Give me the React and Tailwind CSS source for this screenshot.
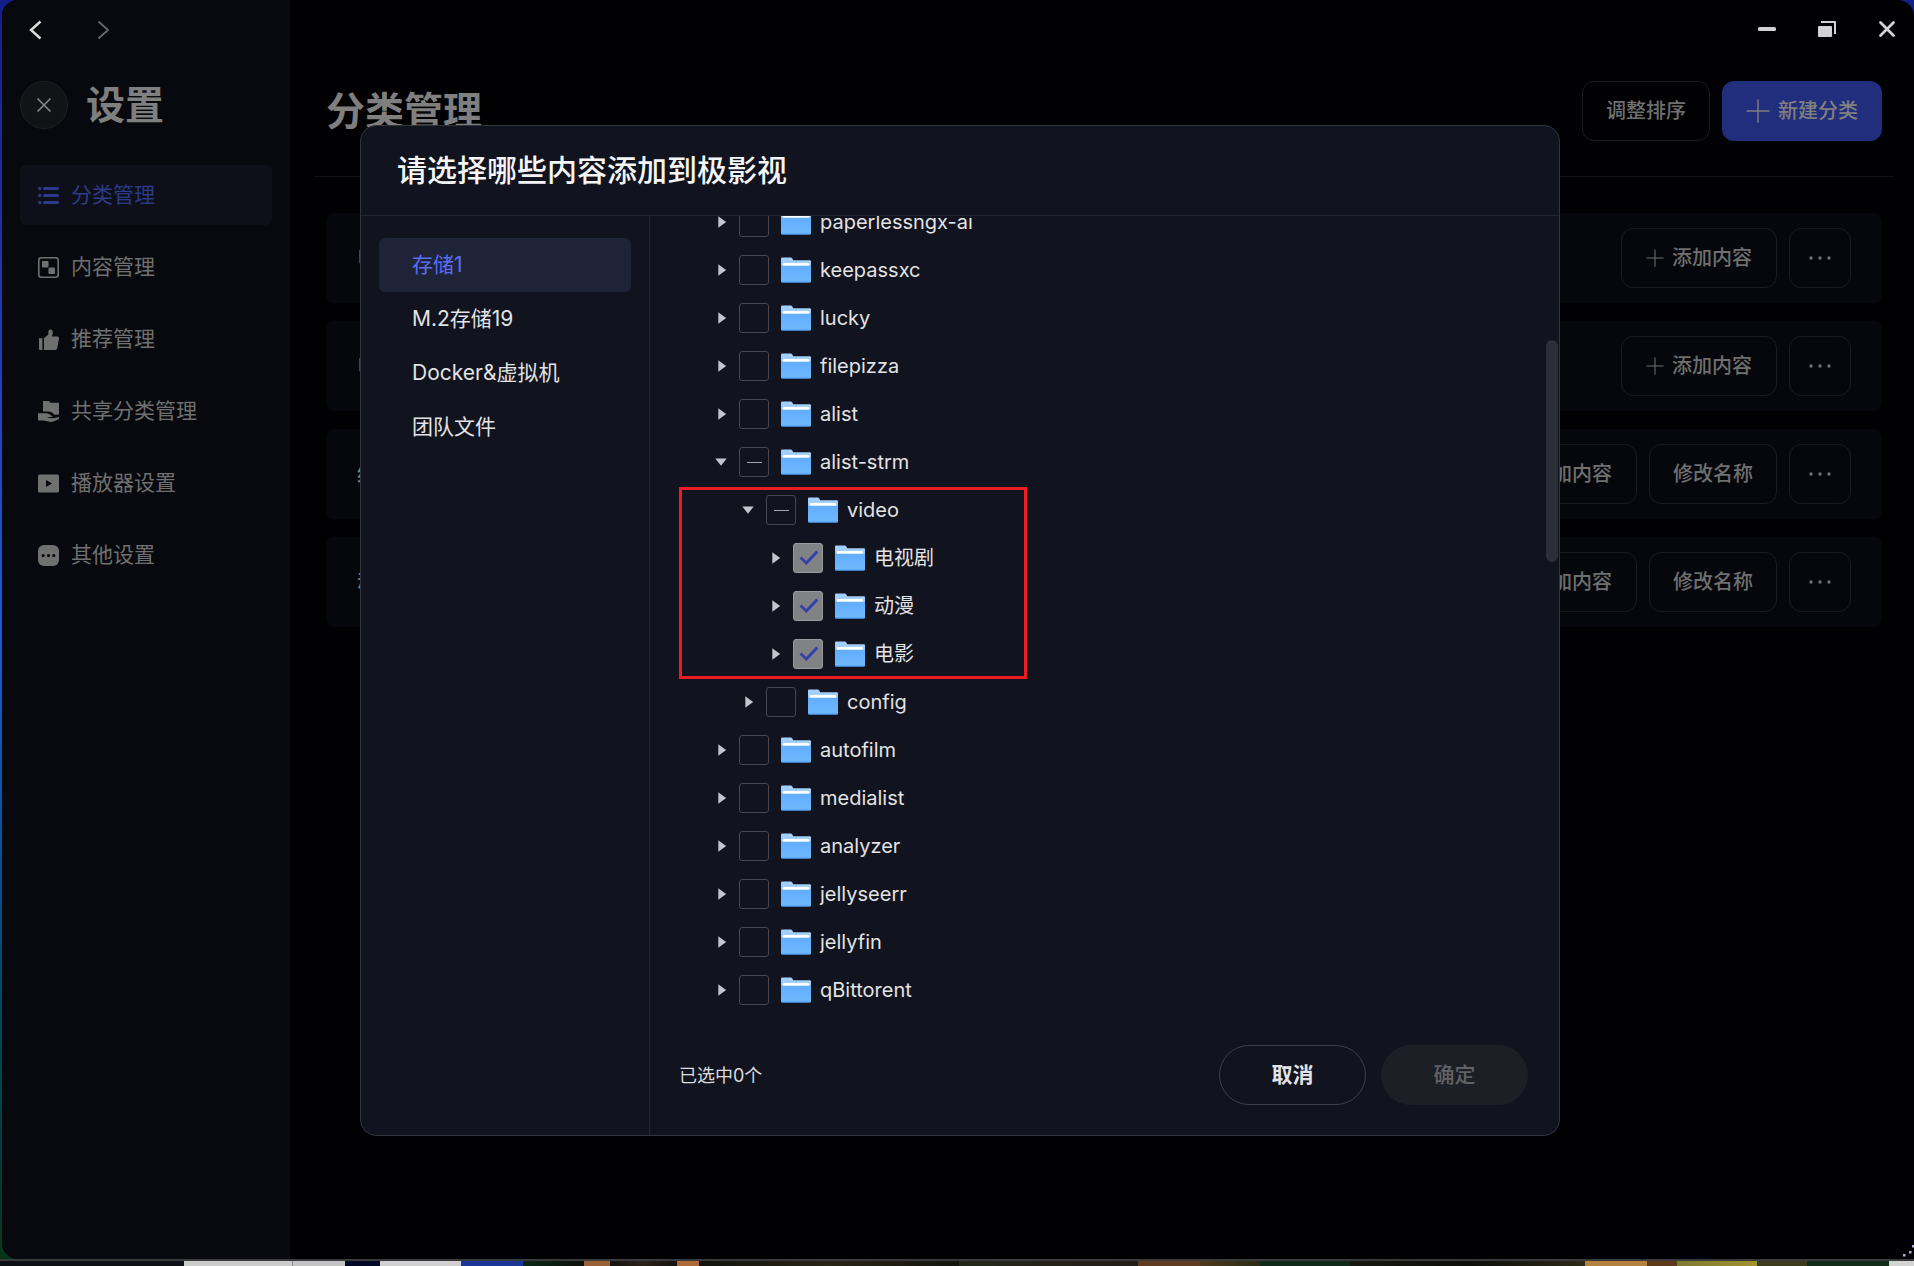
import { useEffect, useRef, useState } from 'react'
import clsx from 'clsx'

const NAV_ITEMS = [
  { key: 'category', label: '分类管理', Icon: ListIcon },
  { key: 'content', label: '内容管理', Icon: ContentIcon },
  { key: 'recommend', label: '推荐管理', Icon: ThumbIcon },
  { key: 'share', label: '共享分类管理', Icon: ShareIcon },
  { key: 'player', label: '播放器设置', Icon: PlayerIcon },
  { key: 'other', label: '其他设置', Icon: OtherIcon },
]

const CATEGORIES = [
  { name: '电影', canRename: false },
  { name: '电视剧', canRename: false },
  { name: '综艺', canRename: true },
  { name: '动漫', canRename: true },
]

const STORAGES = ['存储1', 'M.2存储19', 'Docker&虚拟机', '团队文件']

const TREE_TOP = [
  { name: 'paperlessngx-ai' },
  { name: 'keepassxc' },
  { name: 'lucky' },
  { name: 'filepizza' },
  { name: 'alist' },
  { name: 'alist-strm', open: true, state: 'partial' },
]

const TREE_MARKED = [
  { name: 'video', level: 1, open: true, state: 'partial' },
  { name: '电视剧', level: 2, state: 'locked' },
  { name: '动漫', level: 2, state: 'locked' },
  { name: '电影', level: 2, state: 'locked' },
]

const TREE_BOTTOM = [
  { name: 'config', level: 1 },
  { name: 'autofilm' },
  { name: 'medialist' },
  { name: 'analyzer' },
  { name: 'jellyseerr' },
  { name: 'jellyfin' },
  { name: 'qBittorent' },
]

const INDENT = ['pl-[65px]', 'pl-[92px]', 'pl-[119px]']

function ListIcon() {
  return (
    <svg width="21" height="21" viewBox="0 0 21 21" fill="currentColor" aria-hidden="true">
      <circle cx="1.7" cy="3.5" r="1.7" />
      <circle cx="1.7" cy="10.5" r="1.7" />
      <circle cx="1.7" cy="17.5" r="1.7" />
      <rect x="5" y="1.9" width="16" height="3.2" rx="1.5" />
      <rect x="5" y="8.9" width="16" height="3.2" rx="1.5" />
      <rect x="5" y="15.9" width="16" height="3.2" rx="1.5" />
    </svg>
  )
}

function ContentIcon() {
  return (
    <svg width="21" height="21" viewBox="0 0 21 21" fill="currentColor" aria-hidden="true">
      <rect x="0.8" y="0.8" width="19.4" height="19.4" rx="2.5" fill="none" stroke="currentColor" strokeWidth="1.6" />
      <rect x="4" y="4" width="6.5" height="6.5" rx="1" />
      <rect x="10.5" y="10.5" width="6.5" height="6.5" rx="1" />
    </svg>
  )
}

function ThumbIcon() {
  return (
    <svg width="21" height="21" viewBox="0 0 21 21" fill="currentColor" aria-hidden="true">
      <path d="M1 9.2h3.4V21H2.2A1.2 1.2 0 0 1 1 19.8z" />
      <path d="M6 9.2 10.4 5.6V2.6C10.4 1.4 11.3.6 12.4.6c1.4 0 2.4 1.1 2.4 2.6 0 1.5-.4 2.9-1 4.2h5.4c1.2 0 2 1 1.8 2.1l-1.7 9.6c-.2 1.1-1 1.9-2.2 1.9H6z" />
    </svg>
  )
}

function ShareIcon() {
  return (
    <svg width="21" height="21" viewBox="0 0 21 21" fill="currentColor" aria-hidden="true">
      <path d="M5 0h6l1.5 1.8H21v11.6l-4.4.4c-1.6-2.3-4-3.4-6.6-3.4H5z" />
      <path d="M0 12.2h8.2c2.2 0 3.8 1 5.2 2.6l1.2 1.2-5 .2.2.9 5.6.2L21 15.9v2.2l-5.8 2.4c-1.6.6-3.2.6-4.8 0L5.4 19.4H0z" />
    </svg>
  )
}

function PlayerIcon() {
  return (
    <svg width="21" height="21" viewBox="0 0 21 21" fill="currentColor" aria-hidden="true">
      <path
        fillRule="evenodd"
        d="M1.5 1.5h18A1.5 1.5 0 0 1 21 3v15a1.5 1.5 0 0 1-1.5 1.5h-18A1.5 1.5 0 0 1 0 18V3a1.5 1.5 0 0 1 1.5-1.5zM8 7v7l6-3.5z"
      />
    </svg>
  )
}

function OtherIcon() {
  return (
    <svg width="21" height="21" viewBox="0 0 21 21" aria-hidden="true">
      <rect width="21" height="21" rx="6" fill="currentColor" />
      <g fill="#07090e">
        <circle cx="5.2" cy="10.5" r="1.6" />
        <circle cx="10.5" cy="10.5" r="1.6" />
        <circle cx="15.8" cy="10.5" r="1.6" />
      </g>
    </svg>
  )
}

function PlusIcon({ size }) {
  return (
    <svg width={size} height={size} viewBox="0 0 24 24" fill="none" stroke="currentColor" strokeWidth="1.4" aria-hidden="true">
      <path d="M12 0.5v23M0.5 12h23" />
    </svg>
  )
}

function FolderIcon() {
  return (
    <svg width="30" height="26" viewBox="0 0 30 26" className="shrink-0" aria-hidden="true">
      <defs>
        <linearGradient id="folder-front" x1="0" y1="0" x2="0" y2="1">
          <stop offset="0" stopColor="#62aefd" />
          <stop offset="1" stopColor="#70b9ff" />
        </linearGradient>
      </defs>
      <path d="M1.2 0.5h8.6c.6 0 1 .2 1.3.7l1.2 2h16.5c.7 0 1.2.5 1.2 1.2V20H0V1.7C0 1 .5.5 1.2.5z" fill="#a3cffc" />
      <path d="M3 6h24a1 1 0 0 1 1 1v5H2V7a1 1 0 0 1 1-1z" fill="#fff" />
      <path d="M0 8.8h30v15.5a1.2 1.2 0 0 1-1.2 1.2H1.2A1.2 1.2 0 0 1 0 24.3z" fill="url(#folder-front)" />
      <path d="M0.5 25h29" stroke="#4b9cf0" strokeWidth="1" />
    </svg>
  )
}

function Caret({ open }) {
  return (
    <svg width="12" height="12" viewBox="0 0 12 12" fill="#c3c5cc" aria-hidden="true">
      {open ? <path d="M0.3 2.5h11.4L6 9.7z" /> : <path d="M3.3 0.2v11.6L11.2 6z" />}
    </svg>
  )
}

function TreeRow({ name, level = 0, open = false, state = 'none' }) {
  const inputRef = useRef(null)
  const [checked, setChecked] = useState(state === 'locked')

  useEffect(() => {
    inputRef.current.indeterminate = state === 'partial'
  }, [state])

  return (
    <li className={clsx('flex h-12 items-center', INDENT[level])}>
      <button type="button" aria-label={open ? `收起 ${name}` : `展开 ${name}`} className="mr-3 flex w-3 justify-center">
        <Caret open={open} />
      </button>
      <label className="flex items-center">
        <span className="mr-3 grid h-[30px] w-[30px] place-items-center">
          <input
            ref={inputRef}
            type="checkbox"
            checked={checked}
            disabled={state === 'locked'}
            onChange={(e) => setChecked(e.target.checked)}
            className="col-start-1 row-start-1 h-[30px] w-[30px] appearance-none rounded-[3px] border border-[#444652] disabled:border-[#9b9b9f] disabled:bg-[#818286]"
          />
          {state === 'partial' && <span className="col-start-1 row-start-1 h-px w-[15px] bg-[#a5a6ab]" />}
          {checked && (
            <svg width="20" height="20" viewBox="0 0 20 20" fill="none" className="z-10 col-start-1 row-start-1" aria-hidden="true">
              <path d="M2.5 9.5 8.3 15 19.3 3.5" stroke="#3143a8" strokeWidth="3" />
            </svg>
          )}
        </span>
        <FolderIcon />
        <span className="ml-[9px] text-[20px] leading-6 text-[#e3e3e5]">{name}</span>
      </label>
    </li>
  )
}

function Sidebar() {
  return (
    <aside className="w-72 shrink-0 bg-[#07090e] px-[18px]">
      <div className="flex h-[60px] items-center gap-[46px] pl-[5px]">
        <button type="button" aria-label="后退" className="text-[#dcdcdc]">
          <svg width="21" height="20" viewBox="0 0 21 20" fill="none" stroke="currentColor" strokeWidth="2.4" aria-hidden="true">
            <path d="M15.5 1.5 6 10l9.500 8.500" />
          </svg>
        </button>
        <button type="button" aria-label="前进" className="text-[#68686a]">
          <svg width="21" height="20" viewBox="0 0 21 20" fill="none" stroke="currentColor" strokeWidth="1.8" aria-hidden="true">
            <path d="M6.5 1.5 16 10l-9.5 8.5" />
          </svg>
        </button>
      </div>
      <div className="mt-[21px] flex items-center gap-[18px]">
        <button
          type="button"
          aria-label="关闭设置"
          className="flex h-12 w-12 items-center justify-center rounded-full border border-[#202125] bg-[#121317] text-[#8b8b8b]"
        >
          <svg width="16" height="16" viewBox="0 0 16 16" fill="none" stroke="currentColor" strokeWidth="1.5" aria-hidden="true">
            <path d="m1.5 1.5 13 13M14.5 1.5l-13 13" />
          </svg>
        </button>
        <h1 className="text-[39px] leading-12 font-bold text-[#7f7f7f]">设置</h1>
      </div>
      <nav className="mt-9 flex flex-col gap-3">
        {NAV_ITEMS.map(({ key, label, Icon }, index) => (
          <a
            key={key}
            href={`#${key}`}
            className={clsx(
              'flex h-[60px] items-center gap-3 rounded-md px-[18px] text-[21px]',
              index === 0 ? 'bg-[#0d1019] text-[#2c3a88]' : 'text-[#707070]',
            )}
          >
            <Icon />
            <span>{label}</span>
          </a>
        ))}
      </nav>
    </aside>
  )
}

function OutlineButton({ children, className, label }) {
  return (
    <button
      type="button"
      aria-label={label}
      className={clsx(
        'flex h-[60px] items-center justify-center gap-2 rounded-xl border border-[#1b1c20] text-[20px] font-medium text-[#6f6f6f]',
        className,
      )}
    >
      {children}
    </button>
  )
}

function CategoryCard({ name, canRename }) {
  return (
    <li className="flex h-[90px] items-center gap-3 rounded-lg bg-[#06070c] px-[31px]">
      <span className="mr-auto text-[21px] font-medium text-[#808080]">{name}</span>
      <OutlineButton className="w-[156px]">
        <PlusIcon size={18} />
        添加内容
      </OutlineButton>
      {canRename && <OutlineButton className="w-32">修改名称</OutlineButton>}
      <OutlineButton className="w-[62px]" label="更多">
        <svg width="22" height="4" viewBox="0 0 22 4" fill="currentColor" aria-hidden="true">
          <circle cx="2" cy="2" r="1.7" />
          <circle cx="11" cy="2" r="1.7" />
          <circle cx="20" cy="2" r="1.7" />
        </svg>
      </OutlineButton>
    </li>
  )
}

function WindowControls() {
  return (
    <div className="flex h-[58px] items-center justify-end gap-9 pr-[15px] text-[#d2d2d2]">
      <button type="button" aria-label="最小化">
        <svg width="24" height="24" viewBox="0 0 24 24" fill="currentColor" aria-hidden="true">
          <rect x="3" y="10" width="18" height="4" rx="1.5" />
        </svg>
      </button>
      <button type="button" aria-label="还原">
        <svg width="24" height="24" viewBox="0 0 24 24" fill="currentColor" aria-hidden="true">
          <rect x="3" y="9" width="14" height="11" rx="1" />
          <path d="M6 4h14a1 1 0 0 1 1 1v12h-2V6H6z" />
        </svg>
      </button>
      <button type="button" aria-label="关闭">
        <svg width="24" height="24" viewBox="0 0 24 24" fill="none" stroke="currentColor" strokeWidth="2.8" strokeLinecap="round" aria-hidden="true">
          <path d="m5.5 5.5 13 13M18.5 5.5l-13 13" />
        </svg>
      </button>
    </div>
  )
}

function PickerDialog() {
  const [active, setActive] = useState(STORAGES[0])

  return (
    <div
      role="dialog"
      aria-labelledby="picker-title"
      className="flex h-[1011px] max-h-full w-full max-w-[1200px] flex-col overflow-hidden rounded-2xl border border-[#32343d] bg-[#11131e]"
    >
      <header className="flex h-[90px] shrink-0 items-center border-b border-[#22242e] px-9">
        <h2 id="picker-title" className="text-[30px] font-medium text-[#f5f5f6]">
          请选择哪些内容添加到极影视
        </h2>
      </header>
      <div className="flex min-h-0 flex-1">
        <div className="w-[289px] shrink-0 border-r border-[#22242e] px-[18px] pt-[22px]">
          {STORAGES.map((name) => (
            <button
              key={name}
              type="button"
              onClick={() => setActive(name)}
              className={clsx(
                'flex h-[54px] w-full items-center rounded-md px-[33px] text-[21px]',
                name === active ? 'bg-[#1f2338] text-[#5a6df3]' : 'text-[#e3e3e5]',
              )}
            >
              {name}
            </button>
          ))}
        </div>
        <div className="flex min-w-0 flex-1 flex-col">
          <div className="relative min-h-0 flex-1 overflow-hidden">
            <ul className="-mt-[18px]">
              {TREE_TOP.map((node) => (
                <TreeRow key={node.name} {...node} />
              ))}
              <li className="relative">
                <ul>
                  {TREE_MARKED.map((node) => (
                    <TreeRow key={node.name} {...node} />
                  ))}
                </ul>
                <div className="pointer-events-none absolute top-px -bottom-px left-[29px] w-[348px] border-3 border-[#ed1c24]" />
              </li>
              {TREE_BOTTOM.map((node) => (
                <TreeRow key={node.name} {...node} />
              ))}
            </ul>
            <div className="absolute top-[124px] right-px h-[222px] w-3 rounded-full bg-[#2c2e38]" />
          </div>
          <footer className="flex h-[120px] shrink-0 items-center gap-[15px] pr-[31px] pl-[29px]">
            <p className="mr-auto text-[18px] text-[#dcdcde]">已选中0个</p>
            <button
              type="button"
              className="h-[60px] w-[147px] rounded-full border border-[#3d3f49] text-[21px] font-bold text-[#e3e3e5]"
            >
              取消
            </button>
            <button type="button" disabled className="h-[60px] w-[147px] rounded-full bg-[#1d1f27] text-[21px] font-medium text-[#626264]">
              确定
            </button>
          </footer>
        </div>
      </div>
    </div>
  )
}

// the slice of desktop that shows under the window
function DesktopStrip() {
  return (
    <div className="flex h-[7px] border-t-2 border-[#3a3a3d] bg-[#12160f]">
      <div className="w-[184px] bg-[#0f1017]" />
      <div className="w-[108px] bg-[#cdcdcd]" />
      <div className="w-[53px] border-l border-[#8a8a8a] bg-[#c4c4c4]" />
      <div className="w-[35px] bg-[#020726]" />
      <div className="w-[81px] bg-[#d0d0d0]" />
      <div className="w-[62px] bg-[#1a3797]" />
      <div className="flex flex-1">
        <div className="w-[61px] bg-linear-to-r from-[#0a2a16] to-[#0b0f0b]" />
        <div className="w-[26px] bg-[#9a6036]" />
        <div className="w-[67px] bg-linear-to-r from-[#15120e] via-[#2b2118] to-[#15120e]" />
        <div className="w-[22px] bg-[#b06a38]" />
        <div className="w-[260px] bg-linear-to-r from-[#11140d] via-[#2a2416] to-[#14160e]" />
        <div className="w-[179px] bg-linear-to-r from-[#23281a] to-[#241c18]" />
        <div className="w-[62px] bg-[#5f3c22]" />
        <div className="w-[60px] bg-linear-to-r from-[#4d3a1c] to-[#2a2a16]" />
        <div className="w-[90px] bg-[#0f2a18]" />
        <div className="w-[235px] bg-linear-to-r from-[#17180f] via-[#0e0f0b] to-[#2c2a18]" />
        <div className="w-[62px] bg-[#b5813f]" />
        <div className="w-[30px] bg-[#5f3a1a]" />
        <div className="w-[80px] bg-linear-to-r from-[#7d7a30] to-[#a3922f]" />
        <div className="w-[50px] bg-[#3c3c1c]" />
        <div className="flex-1 bg-[#102c18]" />
      </div>
      <div className="w-[25px] bg-[#d4d4d4]" />
    </div>
  )
}

export default function App() {
  return (
    <div className="flex min-h-screen flex-col font-['Inter','Noto_Sans_CJK_SC',sans-serif]">
      <div className="relative flex flex-1 bg-linear-to-b from-[#141f86] via-[#2456d8] to-[#06351a] pl-0.5">
        <div className="flex flex-1 overflow-hidden rounded-l-2xl rounded-tr-2xl bg-[#010103]">
          <Sidebar />
          <main className="min-w-0 flex-1">
            <WindowControls />
            <div className="mr-5 ml-6 flex h-[119px] items-start border-b border-[#101114] px-3 pt-[23px]">
              <h2 className="mr-auto text-[39px] leading-[60px] font-bold text-[#7f7f7f]">分类管理</h2>
              <OutlineButton className="w-32">调整排序</OutlineButton>
              <button
                type="button"
                className="ml-3 flex h-[60px] w-40 items-center justify-center gap-2 rounded-xl bg-[#212d7d] text-[20px] font-medium text-[#808080]"
              >
                <PlusIcon size={24} />
                新建分类
              </button>
            </div>
            <ul className="mt-9 mr-8 ml-9 flex flex-col gap-[18px]">
              {CATEGORIES.map((item) => (
                <CategoryCard key={item.name} {...item} />
              ))}
            </ul>
          </main>
        </div>
        <div className="absolute inset-0 flex items-center justify-center pt-0.5 pl-1.5">
          <PickerDialog />
        </div>
        <svg width="16" height="16" viewBox="0 0 16 16" fill="#a9addb" className="absolute right-0 bottom-0" aria-hidden="true">
          <rect x="5" y="11" width="2.5" height="2.5" />
          <rect x="11" y="8" width="2.5" height="2.5" />
          <rect x="14" y="2" width="2.5" height="2.5" />
        </svg>
      </div>
      <DesktopStrip />
    </div>
  )
}
